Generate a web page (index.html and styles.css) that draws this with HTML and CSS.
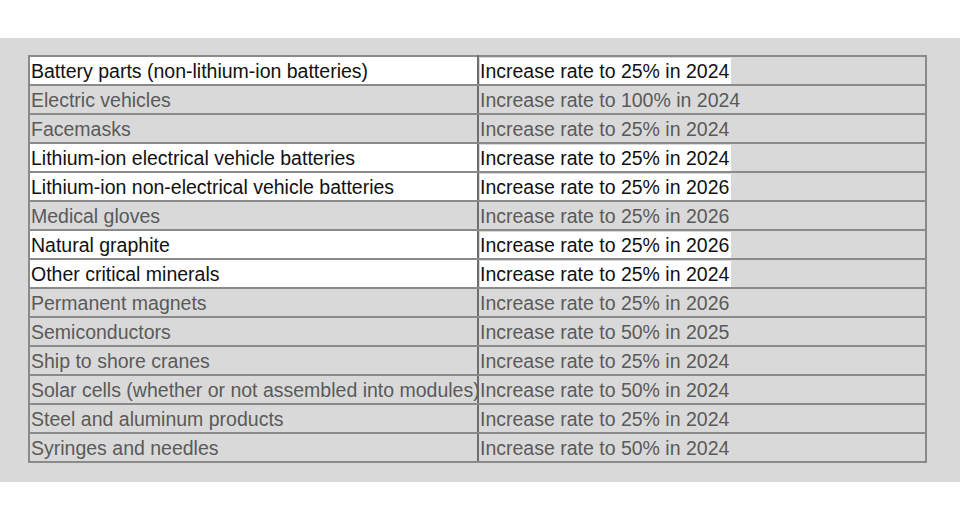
FILE: index.html
```html
<!DOCTYPE html>
<html>
<head>
<meta charset="utf-8">
<link rel="stylesheet" href="styles.css">
</head>
<body>
<div class="panel">
<table class="tariffs">
<tr class="hl"><td>Battery parts (non-lithium-ion batteries)</td><td><span>Increase rate to 25% in 2024</span></td></tr>
<tr><td>Electric vehicles</td><td><span>Increase rate to 100% in 2024</span></td></tr>
<tr><td>Facemasks</td><td><span>Increase rate to 25% in 2024</span></td></tr>
<tr class="hl"><td>Lithium-ion electrical vehicle batteries</td><td><span>Increase rate to 25% in 2024</span></td></tr>
<tr class="hl"><td>Lithium-ion non-electrical vehicle batteries</td><td><span>Increase rate to 25% in 2026</span></td></tr>
<tr><td>Medical gloves</td><td><span>Increase rate to 25% in 2026</span></td></tr>
<tr class="hl"><td>Natural graphite</td><td><span>Increase rate to 25% in 2026</span></td></tr>
<tr class="hl"><td>Other critical minerals</td><td><span>Increase rate to 25% in 2024</span></td></tr>
<tr><td>Permanent magnets</td><td><span>Increase rate to 25% in 2026</span></td></tr>
<tr><td>Semiconductors</td><td><span>Increase rate to 50% in 2025</span></td></tr>
<tr><td>Ship to shore cranes</td><td><span>Increase rate to 25% in 2024</span></td></tr>
<tr><td>Solar cells (whether or not assembled into modules)</td><td><span>Increase rate to 50% in 2024</span></td></tr>
<tr><td>Steel and aluminum products</td><td><span>Increase rate to 25% in 2024</span></td></tr>
<tr><td>Syringes and needles</td><td><span>Increase rate to 50% in 2024</span></td></tr>
</table>
</div>
</body>
</html>
```

FILE: styles.css
```css
html, body {
  margin: 0;
  padding: 0;
  background: #ffffff;
}
.panel {
  margin-top: 38px;
  height: 444px;
  box-sizing: border-box;
  background: #d9d9d9;
  padding: 17px 0 0 28px;
}
.tariffs {
  border-collapse: collapse;
  width: 899px;
  table-layout: fixed;
  border: 2px solid #8a8a8a;
  font-family: "Liberation Sans", Arial, sans-serif;
  font-size: 19.5px;
  color: #5a5a5a;
}
.tariffs td {
  height: 26px;
  padding: 1px 0 0 1px;
  border-top: 2px solid #8a8a8a;
  border-bottom: 2px solid #8a8a8a;
  white-space: nowrap;
  vertical-align: middle;
  line-height: 26px;
}
.tariffs td:first-child {
  width: 446px;
  border-right: 2px solid #6e6e6e;
}
.tariffs tr.hl {
  color: #111111;
}
.tariffs tr.hl td:first-child {
  background: #ffffff;
}
.tariffs tr.hl td span {
  background: #ffffff;
  display: inline-block;
  padding-right: 2px;
}
```
